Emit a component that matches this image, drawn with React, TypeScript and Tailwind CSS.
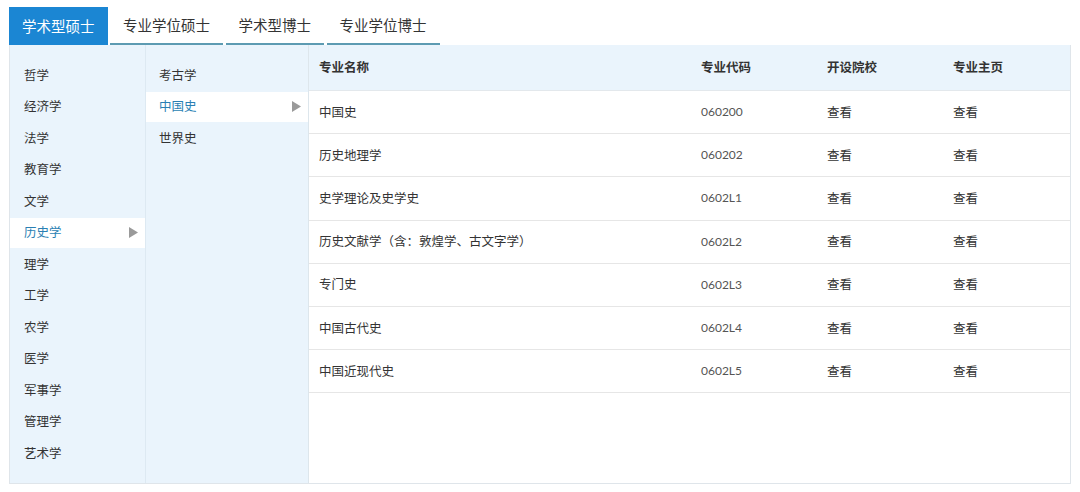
import React from "react";

const tabs = ["学术型硕士", "专业学位硕士", "学术型博士", "专业学位博士"];
const cats = ["哲学", "经济学", "法学", "教育学", "文学", "历史学", "理学", "工学", "农学", "医学", "军事学", "管理学", "艺术学"];
const subs = ["考古学", "中国史", "世界史"];
const rows: [string, string][] = [
  ["中国史", "060200"],
  ["历史地理学", "060202"],
  ["史学理论及史学史", "0602L1"],
  ["历史文献学（含：敦煌学、古文字学）", "0602L2"],
  ["专门史", "0602L3"],
  ["中国古代史", "0602L4"],
  ["中国近现代史", "0602L5"],
];

const Tri = () => (
  <svg width="9" height="11" viewBox="0 0 9 11" className="shrink-0">
    <path d="M0 0 L9 5.5 L0 11 Z" fill="#9a9a9a" />
  </svg>
);

export default function App() {
  return (
    <div
      className="w-[1080px] h-[492px] bg-white pt-[7px] pl-[9px] pr-[9px] text-[#333]"
      style={{ fontFamily: '"Noto Sans CJK SC", "Noto Sans", sans-serif' }}
    >
      <div className="flex h-[38px] gap-[2.5px]">
        {tabs.map((t, i) => (
          <div
            key={t}
            className={
              i === 0
                ? "flex items-center px-[13px] bg-[#1b86d3] text-white text-[14.5px]"
                : "flex items-center px-[13px] border-b-2 border-[#5d9bb2] text-[#333] text-[14.5px]"
            }
          >
            {t}
          </div>
        ))}
      </div>
      <div className="flex h-[439px] border border-t-0 border-[#dfe5ea]">
        <div className="w-[136px] bg-[#eaf4fc] border-r border-[#dde9f2] pt-[15px] flex flex-col gap-[1.5px]">
          {cats.map((c) => (
            <div
              key={c}
              className={
                c === "历史学"
                  ? "h-[30px] flex items-center justify-between pl-[14px] pr-[7px] bg-white text-[#2a7fb3] text-[12.5px]"
                  : "h-[30px] flex items-center pl-[14px] text-[12.5px]"
              }
            >
              <span>{c}</span>
              {c === "历史学" && <Tri />}
            </div>
          ))}
        </div>
        <div className="w-[163px] bg-[#eaf4fc] border-r border-[#dde6ec] pt-[15px] flex flex-col gap-[1.5px]">
          {subs.map((c) => (
            <div
              key={c}
              className={
                c === "中国史"
                  ? "h-[30px] flex items-center justify-between pl-[13px] pr-[7px] bg-white text-[#2a7fb3] text-[12.5px]"
                  : "h-[30px] flex items-center pl-[13px] text-[12.5px]"
              }
            >
              <span>{c}</span>
              {c === "中国史" && <Tri />}
            </div>
          ))}
        </div>
        <div className="flex-1 flex flex-col">
          <div className="flex h-[46px] bg-[#eaf4fc] border-b border-[#e3e8ec] items-center font-bold text-[12.5px]">
            <div className="w-[382px] pl-[10px]">专业名称</div>
            <div className="w-[126px] pl-[10px]">专业代码</div>
            <div className="w-[126px] pl-[10px]">开设院校</div>
            <div className="flex-1 pl-[10px]">专业主页</div>
          </div>
          {rows.map(([n, c]) => (
            <div key={c} className="flex h-[43.2px] items-center border-b border-[#e6e6e6] text-[12.5px]">
              <div className="w-[382px] pl-[10px]">{n}</div>
              <div
                className="w-[126px] pl-[10px] text-[#555] text-[12px]"
                style={{ fontFamily: "Lato, sans-serif" }}
              >
                {c}
              </div>
              <div className="w-[126px] pl-[10px]">查看</div>
              <div className="flex-1 pl-[10px]">查看</div>
            </div>
          ))}
        </div>
      </div>
    </div>
  );
}
